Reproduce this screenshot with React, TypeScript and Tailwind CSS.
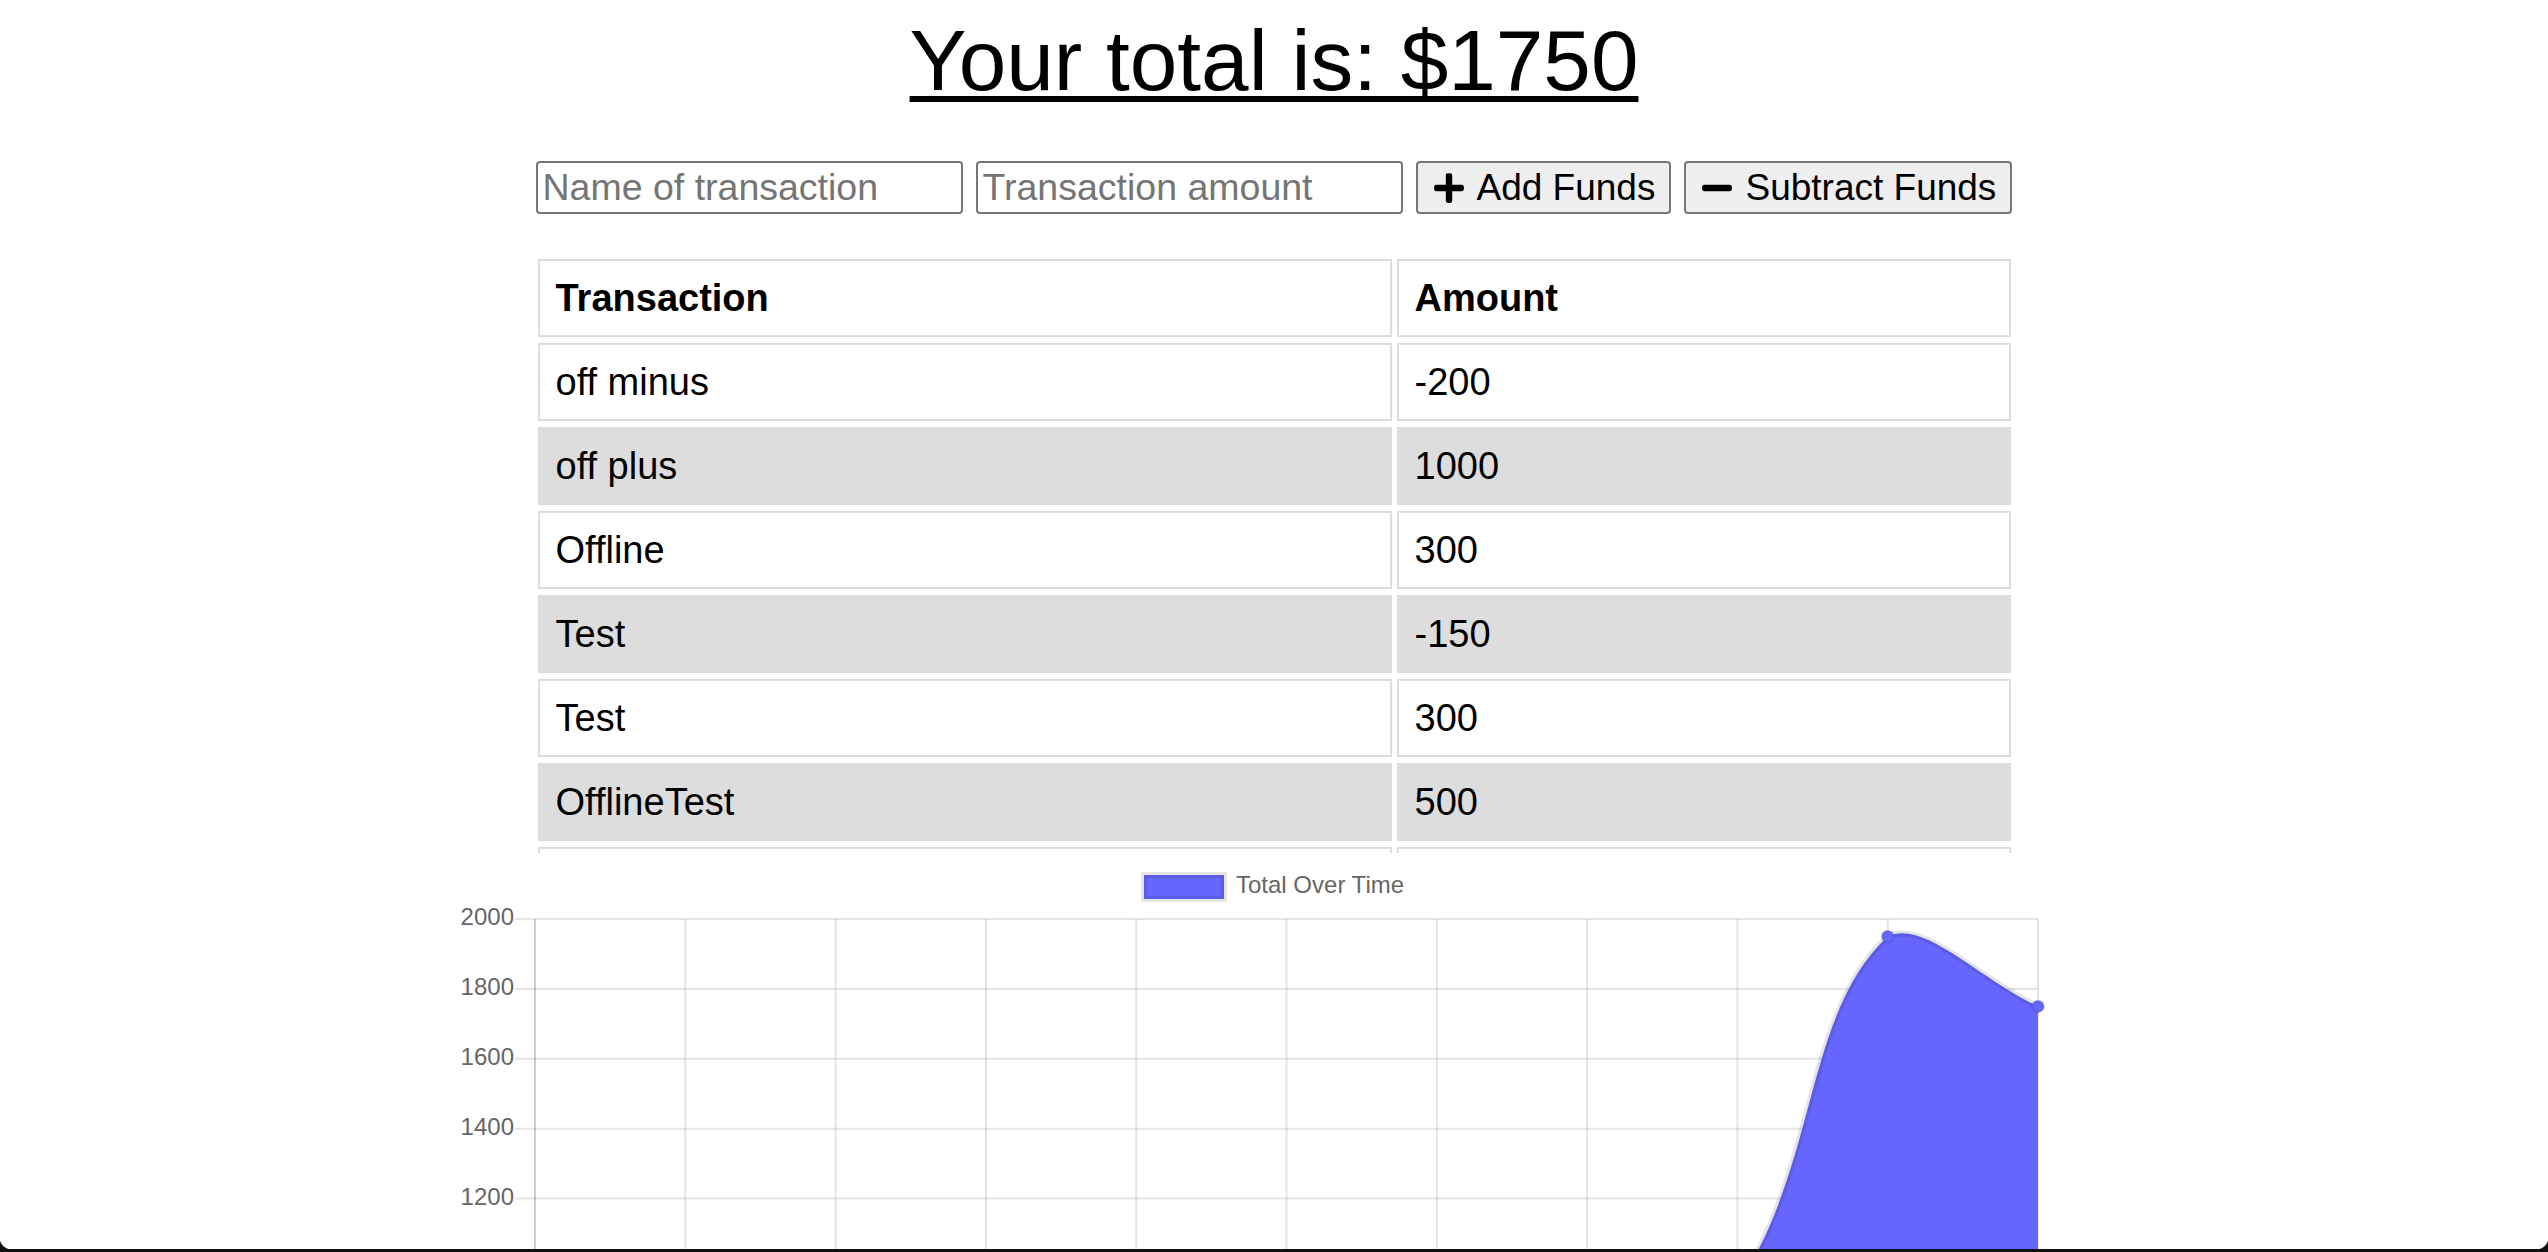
import React from "react";
import { FaPlus, FaMinus } from "react-icons/fa";

type Txn = { name: string; value: number };

// most recent first, as the list shows them
const transactions: Txn[] = [
  { name: "off minus", value: -200 },
  { name: "off plus", value: 1000 },
  { name: "Offline", value: 300 },
  { name: "Test", value: -150 },
  { name: "Test", value: 300 },
  { name: "OfflineTest", value: 500 },
  { name: "Lunch", value: -100 },
  { name: "Rent", value: -600 },
  { name: "Paycheck", value: 500 },
  { name: "Groceries", value: -300 },
  { name: "Savings", value: 500 },
];

// chart geometry (svg spans the full page width)
const LEFT = 535;
const RIGHT = 2038;
const TOP = 64;
const STEP_Y = 69.9; // px per 200
const BOTTOM = TOP + STEP_Y * 10;
const FILL = "#6666ff";
const GRID = "rgba(0,0,0,0.1)";

function yOf(v: number) {
  return TOP + ((2000 - v) / 200) * STEP_Y;
}

function buildPath(pts: { x: number; y: number }[]) {
  const t = 0.4;
  const clamp = (v: number, a: number, b: number) => Math.max(a, Math.min(b, v));
  const cps = pts.map((cur, i) => {
    const prev = pts[i - 1] ?? cur;
    const next = pts[i + 1] ?? cur;
    const d01 = Math.hypot(cur.x - prev.x, cur.y - prev.y);
    const d12 = Math.hypot(next.x - cur.x, next.y - cur.y);
    const s01 = d01 + d12 === 0 ? 0 : d01 / (d01 + d12);
    const s12 = d01 + d12 === 0 ? 0 : d12 / (d01 + d12);
    const fa = t * s01;
    const fb = t * s12;
    return {
      px: clamp(cur.x - fa * (next.x - prev.x), LEFT, RIGHT),
      py: clamp(cur.y - fa * (next.y - prev.y), TOP, BOTTOM),
      nx: clamp(cur.x + fb * (next.x - prev.x), LEFT, RIGHT),
      ny: clamp(cur.y + fb * (next.y - prev.y), TOP, BOTTOM),
    };
  });
  let d = `M${pts[0].x},${pts[0].y}`;
  for (let i = 1; i < pts.length; i++) {
    d += ` C${cps[i - 1].nx},${cps[i - 1].ny} ${cps[i].px},${cps[i].py} ${pts[i].x},${pts[i].y}`;
  }
  return d;
}

function TotalChart() {
  let sum = 0;
  const values = [...transactions].reverse().map((t) => (sum += t.value));
  const step = (RIGHT - LEFT) / (values.length - 1);
  const pts = values.map((v, i) => ({ x: LEFT + i * step, y: yOf(v) }));
  const line = buildPath(pts);
  const zero = yOf(0);
  const area = `${line} L${RIGHT},${zero} L${LEFT},${zero} Z`;
  const ticks = [2000, 1800, 1600, 1400, 1200];

  return (
    <svg width={2548} height={397} viewBox="0 0 2548 397" className="mt-[2px] block" fontFamily="'Liberation Sans', Arial, sans-serif">
      {/* legend */}
      <rect x={1144} y={20} width={80} height={24} fill={FILL} stroke={GRID} strokeWidth={6} />
      <text x={1236} y={32} fontSize={24} fill="#666" dominantBaseline="middle">
        Total Over Time
      </text>

      {/* grid */}
      {ticks.map((v) => (
        <g key={v}>
          <line x1={515} x2={RIGHT} y1={yOf(v)} y2={yOf(v)} stroke={GRID} strokeWidth={2} />
          <text x={514} y={yOf(v)} fontSize={24} fill="#666" textAnchor="end" dominantBaseline="middle">
            {v}
          </text>
        </g>
      ))}
      {values.map((_, i) => (
        <line key={i} x1={LEFT + i * step} x2={LEFT + i * step} y1={TOP} y2={BOTTOM} stroke={GRID} strokeWidth={2} />
      ))}
      <line x1={LEFT} x2={LEFT} y1={TOP} y2={BOTTOM} stroke={GRID} strokeWidth={2} />

      {/* dataset */}
      <path d={area} fill={FILL} />
      <path d={line} fill="none" stroke={GRID} strokeWidth={6} />
      {pts.map((p, i) => (
        <circle key={i} cx={p.x} cy={p.y} r={6} fill={FILL} stroke={GRID} strokeWidth={2} />
      ))}
    </svg>
  );
}

export default function App() {
  // only the rows that fit above the chart are in the list
  const rows = transactions.slice(0, 7);

  return (
    <div className="relative h-[1252px] overflow-hidden bg-white font-['Liberation_Sans',Arial,sans-serif] text-black">
      <div className="mx-auto w-[1477px]">
        <h1 className="pt-[11px] text-center text-[85.5px] leading-[99px] font-normal underline decoration-[6px] underline-offset-[6px]">
          Your total is: $1750
        </h1>

        <div className="mt-[51px] flex gap-[13px] whitespace-nowrap">
          <input
            type="text"
            placeholder="Name of transaction"
            className="h-[53px] w-[427px] shrink-0 rounded-[4px] border-2 border-[#767676] bg-white px-[5px] text-[37.5px] placeholder:text-[#757575]"
          />
          <input
            type="number"
            placeholder="Transaction amount"
            className="h-[53px] w-[427px] shrink-0 rounded-[4px] border-2 border-[#767676] bg-white px-[5px] text-[37.5px] placeholder:text-[#757575]"
          />
          <button className="flex h-[53px] shrink-0 items-center gap-[11px] rounded-[4px] border-2 border-[#767676] bg-[#efefef] px-[14px] text-[37px]">
            <FaPlus size={34} />
            Add Funds
          </button>
          <button className="flex h-[53px] shrink-0 items-center gap-[11px] rounded-[4px] border-2 border-[#767676] bg-[#efefef] px-[14px] text-[37px]">
            <FaMinus size={34} />
            Subtract Funds
          </button>
        </div>

        <div className="-mx-[3px] mt-[39px] h-[600px] overflow-hidden">
          <table className="w-[1483px] table-fixed border-separate border-spacing-x-[5px] border-spacing-y-[6px] text-[38px] leading-[44px]">
            <thead>
              <tr>
                <th className="w-[854px] border-2 border-[#dddddd] px-[16px] py-[15px] text-left font-bold">Transaction</th>
                <th className="w-[614px] border-2 border-[#dddddd] px-[16px] py-[15px] text-left font-bold">Amount</th>
              </tr>
            </thead>
            <tbody>
              {rows.map((t, i) => (
                <tr key={i} className={i % 2 === 1 ? "bg-[#dddddd]" : "bg-white"}>
                  <td className="border-2 border-[#dddddd] px-[16px] py-[15px]">{t.name}</td>
                  <td className="border-2 border-[#dddddd] px-[16px] py-[15px]">{t.value}</td>
                </tr>
              ))}
            </tbody>
          </table>
        </div>
      </div>

      <TotalChart />

      {/* window edge at the bottom of the capture */}
      <div className="pointer-events-none absolute inset-x-0 bottom-0 h-[3px] bg-[#111111]" />
      <div className="pointer-events-none absolute bottom-[3px] left-0 h-[12px] w-[12px] bg-[radial-gradient(circle_at_top_right,transparent_12px,#111111_13px)]" />
      <div className="pointer-events-none absolute bottom-[3px] right-0 h-[12px] w-[12px] bg-[radial-gradient(circle_at_top_left,transparent_12px,#111111_13px)]" />
    </div>
  );
}
